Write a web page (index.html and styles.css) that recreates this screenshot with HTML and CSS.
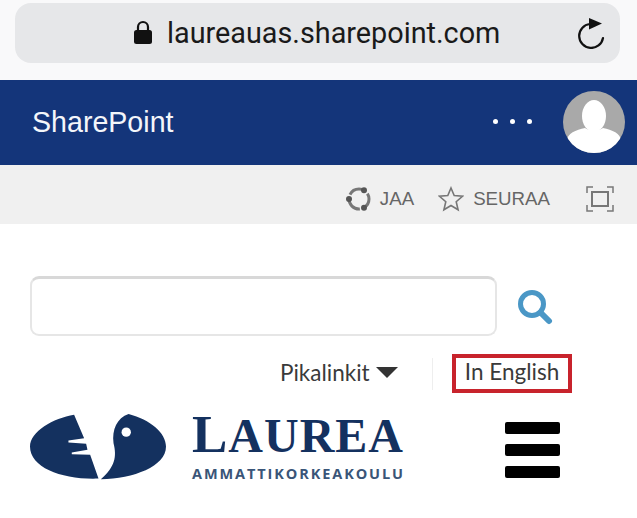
FILE: index.html
```html
<!DOCTYPE html>
<html lang="fi">
<head>
<meta charset="UTF-8" />
<meta name="viewport" content="width=device-width, initial-scale=1" />
<title>Laurea - SharePoint</title>
<link rel="stylesheet" href="styles.css">
</head>
<body>
  <div class="browser">
    <div class="urlbar">
      <svg class="lock" viewBox="0 0 20 24" width="20" height="24">
        <path d="M5 11V7a5 5 0 0 1 10 0v4" fill="none" stroke="#111" stroke-width="2.2"/>
        <rect x="1" y="10" width="18" height="14" rx="2.5" fill="#111"/>
      </svg>
      <span class="url">laureauas.sharepoint.com</span>
      <svg class="reload" viewBox="0 0 28 32" width="28" height="32">
        <path d="M12 7A12 12 0 1 0 25 21" fill="none" stroke="#111" stroke-width="2.2" stroke-linecap="round"/>
        <path d="M11 1l13 5.500-13 6z" fill="#111"/>
      </svg>
    </div>
  </div>

  <header class="suitebar">
    <span class="brand">SharePoint</span>
    <div class="dots"><i></i><i></i><i></i></div>
    <svg class="avatar" viewBox="0 0 62 62" width="62" height="62">
      <defs><clipPath id="round"><circle cx="31" cy="31" r="31"/></clipPath></defs>
      <circle cx="31" cy="31" r="31" fill="#a9a9a9"/>
      <g clip-path="url(#round)">
        <ellipse cx="31" cy="25" rx="12" ry="16" fill="#fff"/>
        <path d="M4 62V50c0-8 9-11 18-13 4 3 14 3 18 0 9 2 18 5 18 13v12z" fill="#fff"/>
      </g>
    </svg>
  </header>

  <div class="toolbar">
    <svg class="share" viewBox="0 0 26 26" width="26" height="26">
      <circle cx="13" cy="13" r="10" fill="none" stroke="#777" stroke-width="3" stroke-dasharray="17 4" stroke-dashoffset="6.300"/>
      <circle cx="3" cy="13" r="3" fill="#555"/>
      <circle cx="18" cy="4.300" r="3" fill="#555"/>
      <circle cx="18" cy="21.700" r="3" fill="#555"/>
    </svg>
    <span class="tool-label label-share">JAA</span>
    <svg class="star" viewBox="0 0 26 26" width="26" height="26">
      <path d="M13 2l3.2 7.6 8.3.7-6.300 5.400 1.900 8.100L13 19.500 5.900 23.800l1.900-8.100L1.500 10.300l8.300-.7z" fill="none" stroke="#777" stroke-width="1.600"/>
    </svg>
    <span class="tool-label label-follow">SEURAA</span>
    <svg class="focus" viewBox="0 0 28 26" width="28" height="26">
      <rect x="6" y="6" width="16" height="14" fill="none" stroke="#777" stroke-width="2"/>
      <path d="M1 7V1h6M21 1h6v6M27 19v6h-6M7 25H1v-6" fill="none" stroke="#777" stroke-width="1.500"/>
    </svg>
  </div>

  <main class="site">
    <div class="search">
      <div class="search-box"></div>
      <svg class="search-icon" viewBox="0 0 36 36" width="36" height="36">
        <circle cx="15" cy="15" r="11.500" fill="none" stroke="#4a97c6" stroke-width="5"/>
        <path d="M23.500 23.500L32 32" stroke="#4a97c6" stroke-width="6" stroke-linecap="round"/>
      </svg>
    </div>

    <div class="links">
      <a class="quick">Pikalinkit<i class="caret"></i></a>
      <span class="divider"></span>
      <a class="lang">In English</a>
    </div>

    <div class="brandrow">
      <div class="logo">
        <svg class="logo-mark" viewBox="90 40 410 200" width="137" height="67">
          <path d="M222 45L252 115 205 122V128L258 132 262 150 215 158V163L270 165 295 236C190 240 90 205 90 140 90 95 160 55 222 45Z" fill="#14315f"/>
          <path d="M302 238C345 200 350 170 340 130 335 90 350 55 385 43 450 60 497 100 497 140 497 200 400 236 302 238Z" fill="#14315f"/>
          <circle cx="378" cy="97" r="14" fill="#fff"/>
        </svg>
        <div class="logo-text">
          <div class="logo-name"><span>L</span>AUREA</div>
          <div class="logo-sub">AMMATTIKORKEAKOULU</div>
        </div>
      </div>
      <div class="burger"><i></i><i></i><i></i></div>
    </div>
  </main>
</body>
</html>
```

FILE: styles.css
```css
body {
  margin: 0;
  background: #fff;
  font-family: "Liberation Sans", Arial, sans-serif;
  overflow: hidden;
}
.browser {
  height: 80px;
  background: #f9f9fa;
  padding: 3px 17px 0 15px;
  box-sizing: border-box;
}
.urlbar {
  height: 60px;
  background: #e6e7e9;
  border-radius: 16px;
  display: flex;
  align-items: center;
  padding-left: 118px;
}
.lock {
  margin-right: 14px;
  margin-top: -3px;
}
.url {
  font-family: "Roboto", sans-serif;
  font-size: 28.800px;
  color: #1a1a1a;
  width: 411px;
}
.suitebar {
  height: 85px;
  background: #14357a;
  display: flex;
  align-items: center;
  padding: 0 12px 0 32px;
}
.brand {
  color: #f4f6fa;
  font-size: 28.600px;
  flex: 1;
}
.dots {
  display: flex;
  gap: 12px;
  margin-right: 31px;
  margin-top: -3px;
}
.dots i {
  width: 5px;
  height: 5px;
  border-radius: 50%;
  background: #fff;
}
.avatar {
  margin-top: -1px;
}
.toolbar {
  height: 59px;
  box-sizing: border-box;
  padding: 8px 23px 0 0;
  background: #f0f0f0;
  display: flex;
  align-items: center;
  justify-content: flex-end;
  color: #666;
}
.tool-label {
  font-size: 18.700px;
}
.share {
  margin-right: 8px;
}
.label-share {
  margin-right: 24px;
}
.star {
  margin-right: 9px;
}
.label-follow {
  margin-right: 36px;
}
.site {
  padding: 52px 0 0 30px;
}
.search {
  display: flex;
  align-items: center;
  height: 60px;
}
.search-box {
  width: 467px;
  height: 60px;
  box-sizing: border-box;
  border: 2px solid #e6e6e6;
  border-top: 3px solid #d8d8d8;
  border-radius: 9px;
  margin-right: 20px;
}
.search-icon {
  margin-top: 2px;
}
.links {
  display: flex;
  align-items: center;
  height: 39px;
  margin-top: 18px;
  padding-left: 250px;
  font-family: "Lato", sans-serif;
  font-size: 22.500px;
  color: #3a3a3a;
}
.quick {
  display: flex;
  align-items: center;
  width: 152px;
  margin-top: -3px;
}
.caret {
  width: 0;
  height: 0;
  margin-left: 6px;
  margin-top: 1px;
  border-left: 11px solid transparent;
  border-right: 11px solid transparent;
  border-top: 11px solid #333;
}
.divider {
  width: 1px;
  height: 32px;
  background: #eee;
  margin-right: 19px;
}
.lang {
  border: 4px solid #c8232c;
  box-sizing: border-box;
  width: 120px;
  height: 39px;
  line-height: 27px;
  text-align: center;
}
.brandrow {
  display: flex;
  align-items: flex-start;
  margin-top: 20px;
}
.logo {
  display: flex;
  width: 475px;
}
.logo-mark {
  margin-right: 25px;
}
.logo-text {
  color: #14315f;
}
.logo-name {
  font-family: "Liberation Serif", serif;
  font-weight: 700;
  font-size: 48px;
  line-height: 46px;
  letter-spacing: 1px;
  white-space: nowrap;
  height: 52px;
}
.logo-name span {
  font-size: 53px;
  line-height: 40px;
}
.logo-sub {
  font-family: "Open Sans", sans-serif;
  font-weight: 700;
  font-size: 14.500px;
  line-height: 18px;
  letter-spacing: 1.900px;
  color: #3a5578;
  white-space: nowrap;
}
.burger {
  display: flex;
  flex-direction: column;
  gap: 10px;
  margin-top: 9px;
}
.burger i {
  display: block;
  width: 55px;
  height: 12px;
  background: #000;
  border-radius: 2px;
}
```
